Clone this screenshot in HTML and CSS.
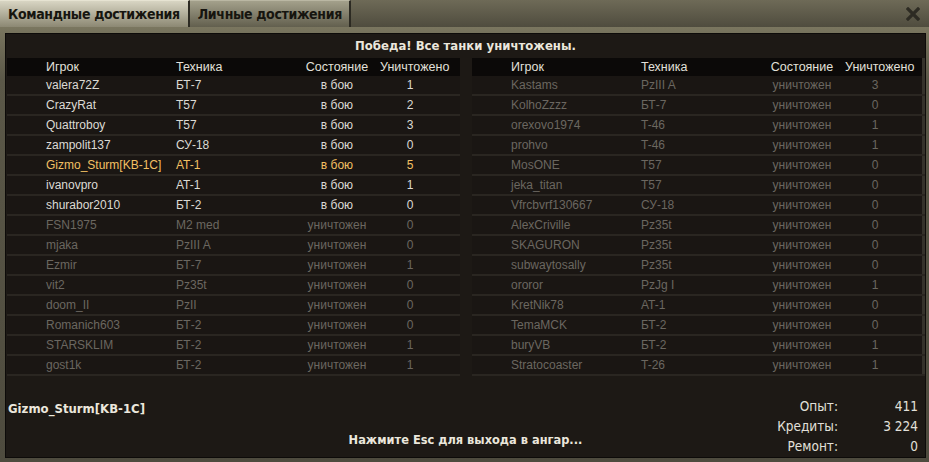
FILE: index.html
```html
<!DOCTYPE html>
<html lang="ru">
<head>
    <meta charset="UTF-8">
    <title>Итоги боя</title>
    <link rel="stylesheet" href="styles.css">
</head>
<body>
    <div class="window">
        <div class="tabbar">
            <div class="tab active">Командные достижения</div>
            <div class="tab">Личные достижения</div>
            <svg class="close" width="14" height="14" viewBox="0 0 14 14">
                <path d="M2 2 L12 12 M12 2 L2 12" stroke="#2d2b23" stroke-width="3.2" stroke-linecap="square"/>
            </svg>
        </div>
        <div class="frame">
            <div class="panel">
                <div class="title">Победа! Все танки уничтожены.</div>

                <div class="teams">
                    <table class="team">
                        <thead>
                            <tr><th class="name">Игрок</th><th class="tank">Техника</th><th class="state">Состояние</th><th class="kills">Уничтожено</th></tr>
                        </thead>
                        <tbody>
                            <tr class="alive"><td class="name">valera72Z</td><td class="tank">БТ-7</td><td class="state">в бою</td><td class="kills">1</td></tr>
                            <tr class="alive"><td class="name">CrazyRat</td><td class="tank">T57</td><td class="state">в бою</td><td class="kills">2</td></tr>
                            <tr class="alive"><td class="name">Quattroboy</td><td class="tank">T57</td><td class="state">в бою</td><td class="kills">3</td></tr>
                            <tr class="alive"><td class="name">zampolit137</td><td class="tank">СУ-18</td><td class="state">в бою</td><td class="kills">0</td></tr>
                            <tr class="me"><td class="name">Gizmo_Sturm[KB-1C]</td><td class="tank">AT-1</td><td class="state">в бою</td><td class="kills">5</td></tr>
                            <tr class="alive"><td class="name">ivanovpro</td><td class="tank">AT-1</td><td class="state">в бою</td><td class="kills">1</td></tr>
                            <tr class="alive"><td class="name">shurabor2010</td><td class="tank">БТ-2</td><td class="state">в бою</td><td class="kills">0</td></tr>
                            <tr><td class="name">FSN1975</td><td class="tank">M2 med</td><td class="state">уничтожен</td><td class="kills">0</td></tr>
                            <tr><td class="name">mjaka</td><td class="tank">PzIII A</td><td class="state">уничтожен</td><td class="kills">0</td></tr>
                            <tr><td class="name">Ezmir</td><td class="tank">БТ-7</td><td class="state">уничтожен</td><td class="kills">1</td></tr>
                            <tr><td class="name">vit2</td><td class="tank">Pz35t</td><td class="state">уничтожен</td><td class="kills">0</td></tr>
                            <tr><td class="name">doom_II</td><td class="tank">PzII</td><td class="state">уничтожен</td><td class="kills">0</td></tr>
                            <tr><td class="name">Romanich603</td><td class="tank">БТ-2</td><td class="state">уничтожен</td><td class="kills">0</td></tr>
                            <tr><td class="name">STARSKLIM</td><td class="tank">БТ-2</td><td class="state">уничтожен</td><td class="kills">1</td></tr>
                            <tr><td class="name">gost1k</td><td class="tank">БТ-2</td><td class="state">уничтожен</td><td class="kills">1</td></tr>
                        </tbody>
                    </table>

                    <table class="team enemy">
                        <thead>
                            <tr><th class="name">Игрок</th><th class="tank">Техника</th><th class="state">Состояние</th><th class="kills">Уничтожено</th></tr>
                        </thead>
                        <tbody>
                            <tr><td class="name">Kastams</td><td class="tank">PzIII A</td><td class="state">уничтожен</td><td class="kills">3</td></tr>
                            <tr><td class="name">KolhoZzzz</td><td class="tank">БТ-7</td><td class="state">уничтожен</td><td class="kills">0</td></tr>
                            <tr><td class="name">orexovo1974</td><td class="tank">T-46</td><td class="state">уничтожен</td><td class="kills">1</td></tr>
                            <tr><td class="name">prohvo</td><td class="tank">T-46</td><td class="state">уничтожен</td><td class="kills">1</td></tr>
                            <tr><td class="name">MosONE</td><td class="tank">T57</td><td class="state">уничтожен</td><td class="kills">0</td></tr>
                            <tr><td class="name">jeka_titan</td><td class="tank">T57</td><td class="state">уничтожен</td><td class="kills">0</td></tr>
                            <tr><td class="name">Vfrcbvrf130667</td><td class="tank">СУ-18</td><td class="state">уничтожен</td><td class="kills">0</td></tr>
                            <tr><td class="name">AlexCriville</td><td class="tank">Pz35t</td><td class="state">уничтожен</td><td class="kills">0</td></tr>
                            <tr><td class="name">SKAGURON</td><td class="tank">Pz35t</td><td class="state">уничтожен</td><td class="kills">0</td></tr>
                            <tr><td class="name">subwaytosally</td><td class="tank">Pz35t</td><td class="state">уничтожен</td><td class="kills">0</td></tr>
                            <tr><td class="name">ororor</td><td class="tank">PzJg I</td><td class="state">уничтожен</td><td class="kills">1</td></tr>
                            <tr><td class="name">KretNik78</td><td class="tank">AT-1</td><td class="state">уничтожен</td><td class="kills">0</td></tr>
                            <tr><td class="name">TemaMCK</td><td class="tank">БТ-2</td><td class="state">уничтожен</td><td class="kills">0</td></tr>
                            <tr><td class="name">buryVB</td><td class="tank">БТ-2</td><td class="state">уничтожен</td><td class="kills">1</td></tr>
                            <tr><td class="name">Stratocoaster</td><td class="tank">T-26</td><td class="state">уничтожен</td><td class="kills">1</td></tr>
                        </tbody>
                    </table>
                </div>

                <div class="footer">
                    <div class="player">Gizmo_Sturm[KB-1C]</div>
                    <div class="hint">Нажмите Esc для выхода в ангар...</div>
                    <dl class="stats">
                        <dt>Опыт:</dt><dd>411</dd>
                        <dt>Кредиты:</dt><dd>3 224</dd>
                        <dt>Ремонт:</dt><dd>0</dd>
                    </dl>
                </div>
            </div>
        </div>
    </div>
</body>
</html>
```

FILE: styles.css
```css
body {
    margin: 0;
    background: #5d5a49;
    font-family: "Liberation Sans", Arial, sans-serif;
}
.window {
    width: 929px;
    height: 462px;
    display: flex;
    flex-direction: column;
}
.tabbar {
    height: 27px;
    display: flex;
    align-items: stretch;
    background: linear-gradient(#6e6a57, #4f4c3e);
    position: relative;
}
.tab {
    font-family: "DejaVu Sans Condensed", "DejaVu Sans", sans-serif;
    font-weight: bold;
    font-size: 14px;
    letter-spacing: -0.35px;
    white-space: nowrap;
    color: #16150f;
    padding: 5px 7px 0 8px;
    background: linear-gradient(#a3a08b, #625f4e);
    border-right: 2px solid #2c2a22;
    border-top: 1px solid #bab7a3;
}
.tab.active {
    background: linear-gradient(#d8d5c3, #8c8873);
    border-top-color: #e6e3d2;
    padding-right: 8px;
}
.close {
    position: absolute;
    right: 9px;
    top: 7px;
}
.frame {
    flex: 1;
    padding: 6px 4px 4px 5px;
    background: linear-gradient(#7a765f, #5b5848 12%, #4e4b3e);
    display: flex;
}
.panel {
    flex: 1;
    background: #1d1915;
    border: 1px solid #0d0b09;
    display: flex;
    flex-direction: column;
}
.title {
    height: 24px;
    line-height: 24px;
    text-align: center;
    font-family: "DejaVu Sans Condensed", "DejaVu Sans", sans-serif;
    font-weight: bold;
    font-size: 13px;
    color: #ebe7dc;
}
.teams {
    display: flex;
    gap: 12px;
    padding-left: 1px;
}
.team {
    width: 453px;
    border-collapse: collapse;
    table-layout: fixed;
    font-size: 12px;
    color: #6b6760;
}
.team.enemy {
    width: 452px;
}
.enemy th:last-child, .enemy td:last-child {
    box-shadow: inset -3px 0 #35322b;
}
.team th {
    height: 18px;
    padding: 0;
    background: #0b0908;
    color: #e2e0da;
    font-weight: normal;
    font-size: 12.5px;
}
.team td {
    height: 18px;
    padding: 0;
    background: #1a1613;
    border-bottom: 2px solid #2a2621;
}
.name { width: 130px; padding-left: 39px !important; text-align: left; }
.tank { width: 118px; text-align: left; }
.state { width: 86px; text-align: center; }
.kills { width: 60px; padding-right: 20px !important; text-align: center; }
.team th.kills { text-align: left; }
.alive td { color: #dcdad3; }
.me td { color: #f2c063; }

.footer {
    flex: 1;
    display: grid;
    grid-template-columns: 1fr auto;
    grid-template-rows: auto 1fr;
    padding: 20px 7px 0 2px;
    position: relative;
}
.player {
    font-family: "DejaVu Sans Condensed", "DejaVu Sans", sans-serif;
    font-weight: bold;
    font-size: 13px;
    color: #ebe7dc;
    margin-top: 5px;
}
.hint {
    position: absolute;
    left: 0;
    right: 0;
    bottom: 10px;
    text-align: center;
    font-family: "DejaVu Sans Condensed", "DejaVu Sans", sans-serif;
    font-weight: bold;
    font-size: 12.7px;
    color: #ebe7dc;
}
.stats {
    margin: 0;
    display: grid;
    grid-template-columns: auto 80px;
    line-height: 20px;
    font-family: "DejaVu Sans Condensed", "DejaVu Sans", sans-serif;
    font-size: 13.5px;
    color: #e2e0da;
    text-align: right;
}
.stats dt, .stats dd { margin: 0; }
```
